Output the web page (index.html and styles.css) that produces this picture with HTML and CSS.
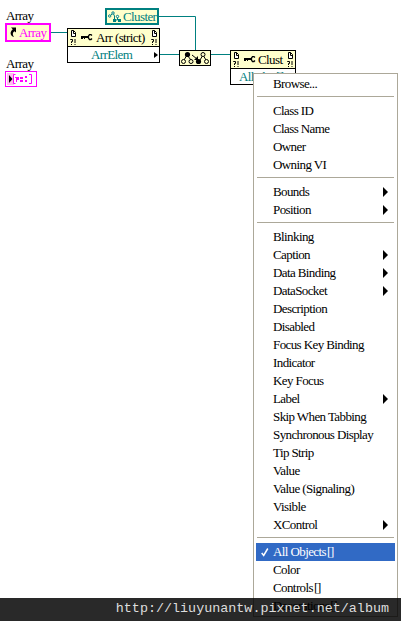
FILE: index.html
```
<!DOCTYPE html>
<html lang="en">

    <head>
        <meta charset="utf-8">
        <title>Property node menu</title>
        <link rel="stylesheet" href="styles.css">
    </head>

    <body>

        <!-- shared icons -->
        <svg class="defs" width="0" height="0">
            <symbol id="page" viewBox="0 0 7 15">
                <path d="M1.500 .5H3.500L5.500 2.500V6.500H1.500ZM3.500 .5V3.500H5.500" fill="#fff" stroke="#000"/>
                <path d="M.5 10V9.500H2.500V11.500H1.500V13M5 9V13" fill="none" stroke="#000"/>
                <path d="M1 14.500H2M4.500 14.500H5.500" stroke="#000"/>
            </symbol>
            <symbol id="key" viewBox="0 0 12 7">
                <path d="M0 2H7V4H4V5H3V4H2V5H0Z"/>
                <path d="M11 1.500L10 .7H8.500L7.500 2V4L8.500 5.500H10L11 4.500" fill="none" stroke="#000" stroke-width="1.300"/>
            </symbol>
        </svg>

        <div class="diagram">
            <svg class="wires" width="401" height="100">
                <path d="M51 32.500H67M159 16.500H195.500V50M160 54.500H179M211 54.500H230"/>
            </svg>

            <span class="label label-ref">Array</span>
            <div class="terminal array-ref">
                <svg width="8" height="11" viewBox="0 0 8 11">
                    <path d="M2 .5H7V5.500L5.500 4.200C3.500 5.500 3.200 7.500 5 10C1 9 .5 5 3.800 2.300Z"/>
                </svg>
                <span>Array</span>
            </div>

            <span class="label label-const">Array</span>
            <div class="terminal array-const">
                <svg width="30" height="14" viewBox="0 0 30 14">
                    <path d="M1 1H8V13H1Z" fill="#fbe"/>
                    <path d="M3 3L6.500 7L3 11Z"/>
                    <path d="M9.500 2.500H7.500V11.500H9.500M23 2.500H25.500V11.500H23" fill="none" stroke="#f0f"/>
                    <path d="M9 5H13V8H11V10H10V6H9ZM14 5H17V7H14ZM14 8H17V10H14ZM19 4H21V6H19ZM19 8H21V10H19Z" fill="#f0f"/>
                </svg>
            </div>

            <div class="terminal cluster">
                <svg width="13" height="12" viewBox="0 0 13 12">
                    <g fill="#fff" stroke="#008080">
                        <path d="M2 5L5 2L6.500 5V9H9.500M9.500 6V9" fill="none"/>
                        <circle cx="1.700" cy="5" r="1.200"/>
                        <circle cx="5" cy="2" r="1.200"/>
                        <circle cx="9.500" cy="5.500" r="1.200"/>
                    </g>
                    <path d="M5 8H8V11H5ZM10 8H13V11H10Z" fill="#008080"/>
                </svg>
                <span>Cluster</span>
            </div>

            <div class="node node-arr">
                <div class="node-head">
                    <svg class="page" width="7" height="15"><use href="#page"/></svg>
                    <svg class="key" width="12" height="7"><use href="#key"/></svg>
                    <span>Arr (strict)</span>
                    <svg class="page page-right" width="7" height="15"><use href="#page"/></svg>
                </div>
                <div class="node-body">
                    <span>ArrElem</span>
                    <svg class="out" width="4" height="6" viewBox="0 0 4 6"><path d="M0 0L4 3L0 6Z"/></svg>
                </div>
            </div>

            <div class="builder">
                <svg width="30" height="14" viewBox="0 0 30 14">
                    <path d="M4 9L7 4L11 9M12 4L17 8M20 9L23 4L26 9" fill="none" stroke="#000"/>
                    <path d="M18 5V9H14Z"/>
                    <g fill="#ffffcc" stroke="#000">
                        <circle cx="3.500" cy="10.500" r="2"/>
                        <circle cx="11" cy="10.500" r="2"/>
                        <circle cx="26.500" cy="10.500" r="2"/>
                        <circle cx="23" cy="3.500" r="2"/>
                    </g>
                    <circle cx="7.500" cy="3.500" r="2.600"/>
                    <circle cx="18.500" cy="10.500" r="2.600"/>
                </svg>
            </div>

            <div class="node node-clust">
                <div class="node-head">
                    <svg class="page" width="7" height="15"><use href="#page"/></svg>
                    <svg class="key" width="12" height="7"><use href="#key"/></svg>
                    <span>Clust</span>
                    <svg class="page page-right" width="7" height="15"><use href="#page"/></svg>
                </div>
                <div class="node-body"><span>AllObjs[]</span></div>
            </div>
        </div>

        <!-- property menu -->
        <ul class="menu">
            <li>Browse...</li>
            <li class="line"></li>
            <li>Class ID</li>
            <li>Class Name</li>
            <li>Owner</li>
            <li>Owning VI</li>
            <li class="line"></li>
            <li class="sub">Bounds</li>
            <li class="sub">Position</li>
            <li class="line"></li>
            <li>Blinking</li>
            <li class="sub">Caption</li>
            <li class="sub">Data Binding</li>
            <li class="sub">DataSocket</li>
            <li>Description</li>
            <li>Disabled</li>
            <li>Focus Key Binding</li>
            <li>Indicator</li>
            <li>Key Focus</li>
            <li class="sub">Label</li>
            <li>Skip When Tabbing</li>
            <li>Synchronous Display</li>
            <li>Tip Strip</li>
            <li>Value</li>
            <li>Value (Signaling)</li>
            <li>Visible</li>
            <li class="sub">XControl</li>
            <li class="line"></li>
            <li class="active">
                <svg class="check" width="8" height="9" viewBox="0 0 8 9"><path d="M.7 5L2.700 7.500L6.800 .5"/></svg>
                All Objects<span class="brackets">[]</span>
            </li>
            <li>Color</li>
            <li>Controls<span class="brackets">[]</span></li>
            <li>Decorations<span class="brackets">[]</span></li>
        </ul>

        <div class="watermark">http://liuyunantw.pixnet.net/album</div>

    </body>

</html>
```

FILE: styles.css
```
body {
    margin: 0;
    width: 401px;
    height: 621px;
    position: relative;
    overflow: hidden;
    background-color: white;
    color: black;
    font-family: "Liberation Serif", serif;
    font-size: 13px;
    letter-spacing: -0.6px;
}
svg {
    display: block;
    flex: none;
}
.defs {
    position: absolute;
}
.wires {
    position: absolute;
    left: 0;
    top: 0;
    fill: none;
    stroke: #008080;
}
.label {
    position: absolute;
    left: 6px;
    line-height: 16px;
}
.label-ref { top: 8px; }
.label-const { top: 56px; }
.terminal {
    position: absolute;
    box-sizing: border-box;
    display: flex;
    align-items: center;
    white-space: nowrap;
}
.array-ref {
    left: 5px;
    top: 23px;
    width: 46px;
    height: 19px;
    padding-left: 2px;
    gap: 2px;
    border: 2px solid #f0f;
    background-color: #ffffcc;
    color: #f0f;
}
.array-const {
    left: 5px;
    top: 71px;
    width: 32px;
    height: 16px;
    border: 1px solid #f0f;
}
.cluster {
    left: 105px;
    top: 8px;
    width: 54px;
    height: 17px;
    padding-left: 1px;
    gap: 2px;
    border: 2px solid #008080;
    background-color: #ffffcc;
    color: #008080;
}
.node {
    position: absolute;
    box-sizing: border-box;
    border: 1px solid black;
    background-color: white;
    height: 35px;
}
.node-arr {
    left: 67px;
    top: 28px;
    width: 93px;
}
.node-clust {
    left: 230px;
    top: 50px;
    width: 66px;
}
.node-head {
    display: flex;
    align-items: center;
    height: 17px;
    padding: 0 1px 0 2px;
    background-color: #ffffcc;
    border-bottom: 1px solid black;
    white-space: nowrap;
}
.key {
    margin: 0 3px 0 4px;
}
.node-clust .key {
    margin-right: 2px;
}
.page-right {
    margin-left: auto;
}
.node-body {
    display: flex;
    align-items: center;
    height: 15px;
    padding: 0 1px 0 23px;
    color: #008080;
}
.node-clust .node-body {
    padding-left: 8px;
}
.out {
    margin-left: auto;
}
.builder {
    position: absolute;
    left: 179px;
    top: 50px;
    border: 1px solid black;
    background-color: #ffffcc;
}
.menu {
    position: absolute;
    left: 253px;
    top: 73px;
    box-sizing: border-box;
    width: 145px;
    height: 544px;
    margin: 0;
    padding: 1px 2px;
    list-style-type: none;
    border: 1px solid #aca899;
    background-color: white;
}
.menu li {
    display: flex;
    align-items: center;
    height: 18px;
    padding-left: 17px;
    line-height: 18px;
    white-space: nowrap;
}
.menu .line {
    height: 1px;
    margin: 3px 1px 5px;
    padding: 0;
    background-color: #aca899;
}
.menu .sub::after {
    content: "";
    margin-left: auto;
    margin-right: 7px;
    border-left: 5px solid black;
    border-top: 5px solid transparent;
    border-bottom: 5px solid transparent;
}
.menu .active {
    padding-left: 5px;
    background-color: #316ac5;
    color: white;
}
.check {
    margin-right: 4px;
    fill: none;
    stroke: white;
    stroke-width: 1.5;
}
.brackets {
    margin-left: 1px;
    letter-spacing: -1.2px;
}
.watermark {
    position: absolute;
    left: 0;
    top: 598px;
    box-sizing: border-box;
    width: 401px;
    height: 23px;
    padding-right: 12px;
    background-color: rgba(0, 0, 0, 0.84);
    color: #ddd;
    font-family: "Liberation Mono", monospace;
    font-size: 13.4px;
    letter-spacing: 0;
    line-height: 22px;
    text-align: right;
}
```
